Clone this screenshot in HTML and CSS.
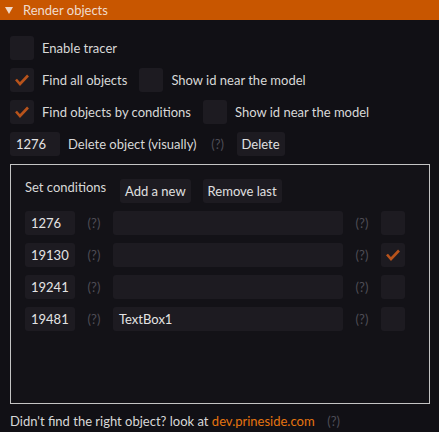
FILE: index.html
```html
<!DOCTYPE html>
<html>
<head>
<meta charset="utf-8">
<link rel="stylesheet" href="styles.css">
</head>
<body>
<div class="header">
  <svg class="arrow" width="8" height="7" viewBox="0 0 8 7"><polygon points="0,0 8,0 4,7" fill="#f0d8c8"/></svg>
  <span>Render objects</span>
</div>
<div class="content">
  <div class="row">
    <div class="check"></div><span class="label">Enable tracer</span>
  </div>
  <div class="row">
    <div class="check on"><svg viewBox="0 0 24 24"><path d="M6 11.5 L10 16 L18 7.5"/></svg></div><span class="label">Find all objects</span>
    <div class="check"></div><span class="label">Show id near the model</span>
  </div>
  <div class="row">
    <div class="check on"><svg viewBox="0 0 24 24"><path d="M6 11.5 L10 16 L18 7.5"/></svg></div><span class="label">Find objects by conditions</span>
    <div class="check"></div><span class="label">Show id near the model</span>
  </div>
  <div class="row">
    <div class="input short">1276</div><span class="label2">Delete object (visually)</span>
    <span class="help">(?)</span>
    <div class="btn">Delete</div>
  </div>
  <div class="panel">
    <div class="prow">
      <span class="title">Set conditions</span>
      <div class="btn">Add a new</div>
      <div class="btn">Remove last</div>
    </div>
    <div class="crow">
      <div class="input short">1276</div><span class="help">(?)</span>
      <div class="input wide"></div><span class="help">(?)</span>
      <div class="check"></div>
    </div>
    <div class="crow">
      <div class="input short">19130</div><span class="help">(?)</span>
      <div class="input wide"></div><span class="help">(?)</span>
      <div class="check on"><svg viewBox="0 0 24 24"><path d="M6 11.5 L10 16 L18 7.5"/></svg></div>
    </div>
    <div class="crow">
      <div class="input short">19241</div><span class="help">(?)</span>
      <div class="input wide"></div><span class="help">(?)</span>
      <div class="check"></div>
    </div>
    <div class="crow">
      <div class="input short">19481</div><span class="help">(?)</span>
      <div class="input wide">TextBox1</div><span class="help">(?)</span>
      <div class="check"></div>
    </div>
  </div>
  <div class="footer">
    <span>Didn't find the right object? look at <span class="link">dev.prineside.com</span></span>
    <span class="help">(?)</span>
  </div>
</div>
</body>
</html>
```
FILE: styles.css
```css
html, body {
  margin: 0;
  padding: 0;
  background: #111015;
  width: 439px;
  height: 432px;
  overflow: hidden;
  font-family: Lato, "Open Sans", sans-serif;
  font-size: 13px;
  color: #d8d8d8;
}
.header {
  height: 20px;
  background: #c85600;
  display: flex;
  align-items: center;
  color: #f0dccf;
}
.arrow {
  margin-left: 5px;
  margin-right: 10px;
}
.content {
  padding: 16px 9px 0 10px;
  display: flex;
  flex-direction: column;
  gap: 8px;
}
.row, .prow, .crow {
  display: flex;
  align-items: center;
  height: 24px;
  gap: 12px;
}
.check {
  width: 24px;
  height: 24px;
  border-radius: 3px;
  background: #1d1b21;
  flex: none;
  display: flex;
  align-items: center;
  justify-content: center;
}
.check svg {
  width: 24px;
  height: 24px;
}
.check svg path {
  fill: none;
  stroke: #b8531b;
  stroke-width: 2.6;
}
.check + .label {
  margin-left: -4px;
}
.input {
  height: 24px;
  border-radius: 3px;
  background: #1d1b21;
  box-sizing: border-box;
  padding-left: 6px;
  display: flex;
  align-items: center;
  color: #e4e4e4;
  flex: none;
}
.input.short { width: 50px; }
.input.wide { width: 230px; }
.input + .label2 {
  margin-left: -4px;
}
.help {
  color: #4e4d55;
  width: 14px;
  text-align: center;
  flex: none;
}
.row .help {
  margin-left: 2px;
}
.btn {
  height: 24px;
  padding: 0 5px;
  border-radius: 3px;
  background: #1d1b21;
  display: flex;
  align-items: center;
  color: #e0e0e0;
}
.panel {
  box-sizing: border-box;
  border: 1px solid #c4c4c4;
  background: #131217;
  height: 240px;
  padding: 14px 14px 0 14px;
  display: flex;
  flex-direction: column;
  gap: 8px;
}
.prow .title {
  align-self: flex-start;
  width: 83px;
}
.footer {
  display: flex;
  align-items: center;
  gap: 12px;
  height: 24px;
  margin-top: -3px;
}
.link {
  color: #e57410;
}
```
